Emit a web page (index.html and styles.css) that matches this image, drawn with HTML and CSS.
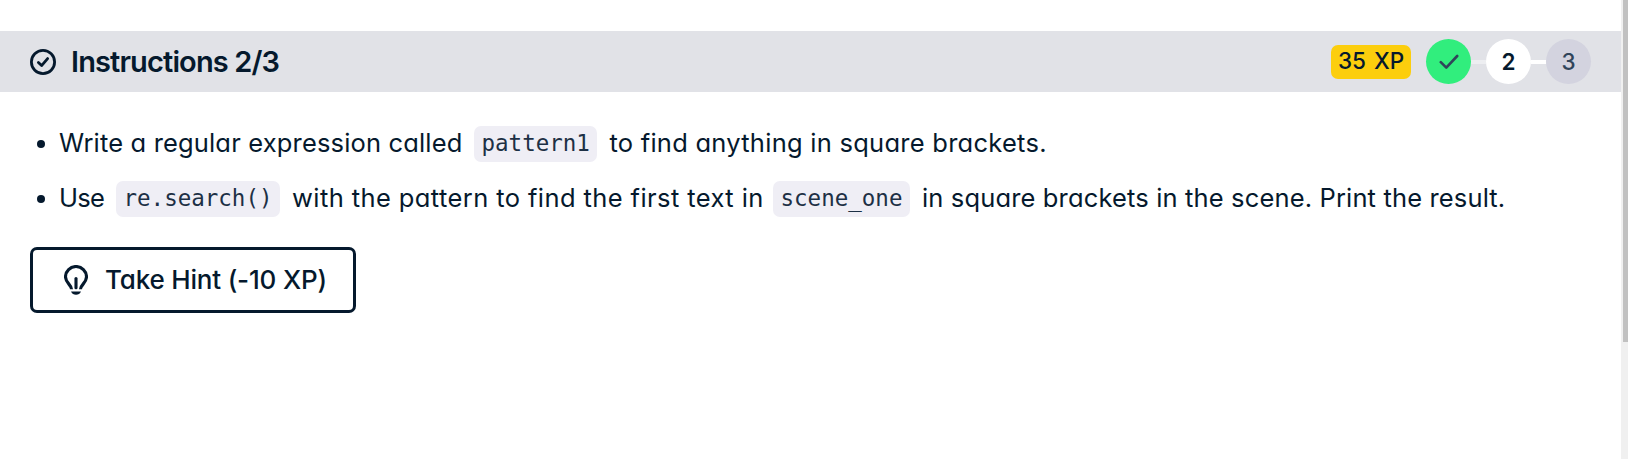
FILE: index.html
```html
<!DOCTYPE html>
<html lang="en">
<head>
<meta charset="utf-8">
<title>Instructions</title>
<link rel="stylesheet" href="styles.css">
</head>
<body>
<div class="page">
  <main class="panel">
    <header class="header">
      <svg class="header-icon" viewBox="0 0 26 26" fill="none" stroke="currentColor" stroke-linecap="round" stroke-linejoin="round"><circle cx="13" cy="13" r="11.6" stroke-width="2.8"/><path d="M8.4 13.5l3.2 3.1 6-7" stroke-width="2.8"/></svg>
      <h1 class="title">Instructions 2/3</h1>
      <div class="progress">
        <span class="xp">35 XP</span>
        <span class="step step-done"><svg class="check" viewBox="0 0 20 16" fill="none" stroke="currentColor" stroke-width="2.6" stroke-linecap="round" stroke-linejoin="round"><path d="M1.8 8.2l5.5 5.5L18.2 2"/></svg></span>
        <span class="link link-done"></span>
        <span class="step step-current">2</span>
        <span class="link"></span>
        <span class="step step-next">3</span>
      </div>
    </header>
    <ul class="list">
      <li class="item"><span class="run run-a">Write a regular expression called</span><code class="code">pattern1</code><span class="run run-b">to find anything in square brackets.</span></li>
      <li class="item"><span class="run run-c">Use</span><code class="code">re.search()</code><span class="run run-d">with the pattern to find the first text in</span><code class="code">scene_one</code><span class="run run-e">in square brackets in the scene. Print the result.</span></li>
    </ul>
    <button class="hint"><svg class="bulb" viewBox="0 0 24 30" fill="none" stroke="currentColor"><path d="M7.5 24.2C7.5 19.8 1.5 18 1.5 11.8A10.5 10.3 0 0 1 22.5 11.8C22.5 18 16.5 19.8 16.5 24.2" stroke-width="3.1"/><path d="M12 13.5V22.8" stroke-width="3.1" stroke-linecap="round"/><path d="M7 26.5H17Q15.5 29.8 12 29.8T7 26.5Z" fill="currentColor" stroke="none"/></svg><span class="hint-label">Take Hint (-10 XP)</span></button>
  </main>
  <div class="scrollbar"><div class="thumb"></div></div>
</div>
</body>
</html>
```
FILE: styles.css
```css
body { margin: 0; background: #fff; color: #05192d; font-family: Inter, "Liberation Sans", sans-serif; font-feature-settings: "cv11", "ss03"; }
.page { display: flex; height: 459px; overflow: hidden; }
.panel { flex: 1; min-width: 0; padding-top: 31px; }
.header { display: flex; align-items: center; height: 61px; box-sizing: border-box; padding: 0 30px; background: #e1e2e7; }
.header-icon { width: 26px; height: 26px; }
.title { margin: 0 0 0 15px; font-size: 29px; line-height: 36px; font-weight: 600; letter-spacing: -0.87px; white-space: nowrap; }
.progress { display: flex; align-items: center; margin-left: auto; }
.xp { width: 80px; height: 34px; margin-right: 15px; border-radius: 7px; background: #fcce0d; font-size: 22.5px; line-height: 32px; font-weight: 500; text-align: center; word-spacing: 2px; }
.step { display: flex; align-items: center; justify-content: center; width: 45px; height: 45px; border-radius: 50%; font-size: 22.5px; line-height: 44px; }
.step-done { background: #31ee7d; color: #30445a; }
.step-current { background: #fff; font-weight: 600; }
.step-next { background: #d3d3df; color: #30445a; font-weight: 500; }
.check { width: 20px; height: 16px; }
.link { width: 15px; height: 4px; background: #fff; }
.link-done { background: #edeef1; }
.list { margin: 0; padding: 24px 0 0 30px; list-style: none; }
.item { display: flex; align-items: center; height: 55px; font-size: 25.5px; white-space: nowrap; }
.item::before { content: ""; width: 8px; height: 8px; margin: 0 14px 0 7px; border-radius: 50%; background: #05192d; }
.run { padding-bottom: 2px; }
.run-a { width: 403px; letter-spacing: 0.16px; }
.run-b { letter-spacing: 0.26px; }
.run-c { width: 45px; letter-spacing: -0.7px; }
.run-d { width: 469px; letter-spacing: 0.41px; }
.run-e { letter-spacing: 0.15px; }
.code { height: 36px; margin: 0 12px; padding: 0 7.5px; border-radius: 7px; background: #efeef5; color: #1d3045; font: 22.5px/35px "DejaVu Sans Mono", monospace; }
.hint { display: flex; align-items: center; width: 326px; height: 66px; box-sizing: border-box; margin: 21px 0 0 30px; padding: 0 0 0 31px; border: 3px solid #05192d; border-radius: 7px; background: #fff; color: inherit; font: 500 26px/32px Inter, "Liberation Sans", sans-serif; font-feature-settings: inherit; }
.bulb { width: 24px; height: 30px; }
.hint-label { margin-left: 17px; letter-spacing: -0.18px; white-space: nowrap; }
.scrollbar { width: 7px; background: #f0f0f0; }
.thumb { height: 342px; margin-left: 2px; background: #c1c1c1; }
```
